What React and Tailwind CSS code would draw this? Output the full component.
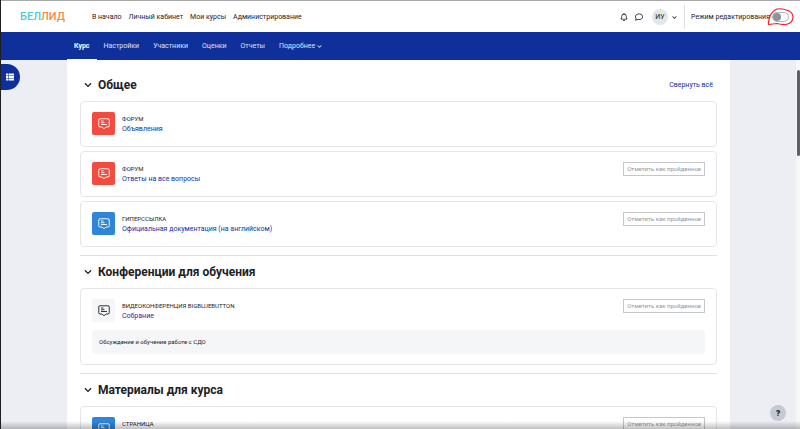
import { useState } from 'react';
import { FaChevronDown, FaQuestion, FaRegBell, FaRegComment, FaThList } from 'react-icons/fa';

const siteLinks = ['В начало', 'Личный кабинет', 'Мои курсы', 'Администрирование'];
const courseTabs = ['Курс', 'Настройки', 'Участники', 'Оценки', 'Отчеты', 'Подробнее'];

const sections = [
  {
    title: 'Общее',
    items: [
      { id: 1, type: 'Форум', name: 'Объявления', color: 'red' },
      { id: 2, type: 'Форум', name: 'Ответы на все вопросы', color: 'red', manual: true },
      { id: 3, type: 'Гиперссылка', name: 'Официальная документация (на английском)', color: 'blue', manual: true },
    ],
  },
  {
    title: 'Конференции для обучения',
    items: [
      {
        id: 4,
        type: 'Видеоконференция BigBlueButton',
        name: 'Собрание',
        color: 'gray',
        manual: true,
        description: 'Обсуждение и обучение работе с СДО',
      },
    ],
  },
  {
    title: 'Материалы для курса',
    items: [{ id: 5, type: 'Страница', color: 'blue', manual: true }],
  },
];

const iconColors = {
  red: 'bg-[#f34b3f] text-white',
  blue: 'bg-[#2f86d9] text-white',
  gray: 'bg-[#f5f6f8] text-[#1d2125]',
};

function ActivityIcon({ color }) {
  return (
    <div className={`flex h-[23px] w-[23px] shrink-0 items-center justify-center rounded-xs ${iconColors[color]}`}>
      <svg viewBox="0 0 24 24" className="h-3 w-3" fill="none" stroke="currentColor" strokeWidth="1.8" strokeLinejoin="round">
        <path d="M4 1.500h16A2.500 2.500 0 0 1 22.500 4v11.500A2.500 2.500 0 0 1 20 18h-4l-4 3.500L8 18H4a2.500 2.500 0 0 1-2.500-2.500V4A2.500 2.500 0 0 1 4 1.500z" />
        <path d="M6 6h5M6 9.500h7M6 13h12" />
      </svg>
    </div>
  );
}

function Activity({ item }) {
  return (
    <li className="rounded-sm border border-[#e4e6e9] px-[11px] py-[10px]">
      <div className="flex h-6 gap-[7px]">
        <ActivityIcon color={item.color} />
        <div className="pt-[2px]">
          <p className="text-[6px] leading-[10px] text-[#1d2125] uppercase">{item.type}</p>
          {item.name && (
            <a href="#" className="block text-[7px] leading-[10px] text-[#0f2fa8]">{item.name}</a>
          )}
        </div>
        {item.manual && (
          <button className="ml-auto h-[14px] shrink-0 border border-[#c3c7cb] px-[3px] text-[6px] leading-3 text-[#8f959e]">
            Отметить как пройденное
          </button>
        )}
      </div>
      {item.description && (
        <p className="mt-[7px] rounded-sm bg-[#f5f6f8] p-[7px] text-[6px] leading-[10px] text-[#1d2125]">
          {item.description}
        </p>
      )}
    </li>
  );
}

function Header() {
  const [editing, setEditing] = useState(false);

  return (
    <header className="flex h-8 shrink-0 items-center border-t border-[#a9a9a9] bg-white pt-px pr-[11px] pl-[19px] text-[7px] text-[#1d2125]">
      <a href="#" className="text-[11px] leading-4 font-medium text-[#4ccbdc]">
        БЕЛ<span className="text-[#f58b45]">ЛИД</span>
      </a>
      <nav className="ml-[27px] flex gap-[7px]">
        {siteLinks.map((link) => (
          <a key={link} href="#">{link}</a>
        ))}
      </nav>

      <div className="ml-auto flex h-6 items-center">
        <button aria-label="Уведомления"><FaRegBell className="h-2 w-2" /></button>
        <button aria-label="Сообщения" className="ml-[7px]"><FaRegComment className="h-2 w-2" /></button>
        <button className="ml-[9px] flex items-center gap-1">
          <span className="flex h-4 w-4 items-center justify-center rounded-full bg-[#e3e6ea]">ИУ</span>
          <FaChevronDown className="h-[5px] w-[5px]" />
        </button>
        <label className="ml-[7px] flex h-full items-center border-l border-[#dee2e6] pl-[6px]">
          Режим редактирования
          <span className="relative ml-[2px] flex">
            <input
              type="checkbox"
              checked={editing}
              onChange={(e) => setEditing(e.target.checked)}
              className="peer h-[10px] w-[17px] appearance-none rounded-full border border-[#aeb4bb] bg-white"
            />
            <span className="absolute top-px left-px h-2 w-2 rounded-full bg-[#8b929b] peer-checked:left-2" />
            <svg
              viewBox="0 0 28 20"
              className="pointer-events-none absolute -top-[5px] -left-[5px] h-5 w-7 max-w-none"
              fill="none"
              stroke="#f5222d"
              strokeWidth="1.2"
              strokeLinecap="round"
              strokeLinejoin="round"
            >
              <path d="M4 7Q1 12 1.500 17.500L10 16.500q5 1.500 9 1 7-1.500 7-7.500 0-5.500-7-7Q12 .5 8 3 4 5.500 2.500 11" />
            </svg>
          </span>
        </label>
      </div>
    </header>
  );
}

function CourseNav() {
  return (
    <nav className="flex h-7 shrink-0 bg-[#0f309b] pl-[66px] text-[7px] text-[#dfe4f3]">
      {courseTabs.map((tab, i) => (
        <a
          key={tab}
          href="#"
          className={`flex items-center gap-[2px] border-b px-[7px] pt-[2px] ${i === 0 ? 'border-white font-bold text-white' : 'border-transparent'}`}
        >
          {tab}
          {tab === 'Подробнее' && <FaChevronDown className="h-[5px] w-[5px]" />}
        </a>
      ))}
    </nav>
  );
}

export default function App() {
  return (
    <div className="relative flex h-screen flex-col overflow-hidden border-l border-[#1d2125] bg-[#edeef4] font-['Roboto','Liberation_Sans',sans-serif]">
      <Header />
      <CourseNav />

      <div className="flex min-h-0 flex-1">
        <main className="mx-[66px] flex-1 self-start bg-white px-[13px] pt-[9px]">
          {sections.map((section, i) => (
            <section key={section.title} className={`pb-2 ${i > 0 ? 'border-t border-[#dee2e6]' : ''}`}>
              <div className="flex h-8 items-center px-1">
                <button aria-label="Свернуть"><FaChevronDown className="h-2 w-2 text-[#1d2125]" /></button>
                <h3 className="ml-[6px] text-[12px] leading-4 font-bold text-[#1d2125]">{section.title}</h3>
                {i === 0 && <a href="#" className="ml-auto text-[7px] text-[#0f2fa8]">Свернуть всё</a>}
              </div>
              <ul className="flex flex-col gap-1">
                {section.items.map((item) => <Activity key={item.id} item={item} />)}
              </ul>
            </section>
          ))}
        </main>
        {/* Scroll track */}
        <div className="w-1 bg-[#f7f7fa] pt-[10px] pl-px">
          <div className="h-[86px] rounded-full bg-[#59626b]" />
        </div>
      </div>

      <button
        aria-label="Открыть оглавление"
        className="absolute top-16 left-0 flex h-[26px] w-[19px] items-center rounded-r-full bg-[#0f309b] pl-[5px] text-white"
      >
        <FaThList className="h-2 w-2" />
      </button>
      <button
        aria-label="Справка"
        className="absolute right-[14px] bottom-2 flex h-4 w-4 items-center justify-center rounded-full bg-[#c5cad2] text-[#1d2125]"
      >
        <FaQuestion className="h-[6px] w-[6px]" />
      </button>
      <div className="pointer-events-none absolute inset-x-0 bottom-0 h-2 bg-linear-to-t from-black/25 to-transparent" />
    </div>
  );
}
